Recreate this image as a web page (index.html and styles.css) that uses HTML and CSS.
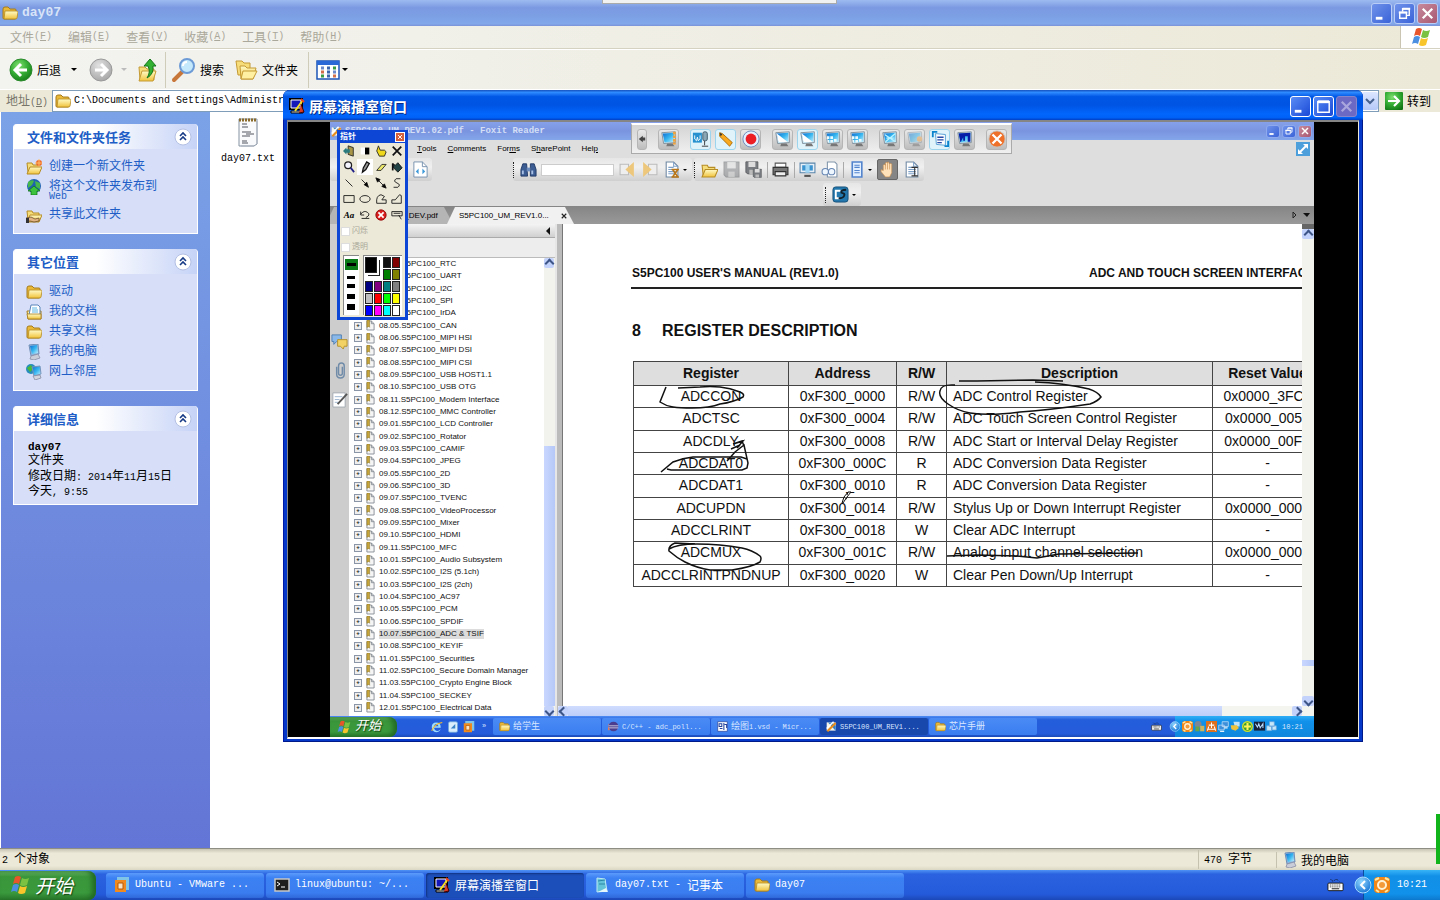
FILE: index.html
```html
<!DOCTYPE html>
<html lang="zh-CN">
<head>
<meta charset="utf-8">
<title>day07</title>
<link rel="stylesheet" href="styles.css">
</head>
<body>
<svg class="defs" aria-hidden="true">
  <defs>
    <linearGradient id="gy" x1="0" y1="0" x2="0" y2="1"><stop offset="0" stop-color="#fffbc8"/><stop offset="1" stop-color="#f1c33c"/></linearGradient>
    <linearGradient id="gb" x1="0" y1="0" x2="1" y2="1"><stop offset="0" stop-color="#0d6bd0"/><stop offset=".5" stop-color="#35b5ef"/><stop offset="1" stop-color="#c8f3ff"/></linearGradient>
    <radialGradient id="gg" cx=".4" cy=".3" r=".8"><stop offset="0" stop-color="#7fe06f"/><stop offset=".5" stop-color="#35ad35"/><stop offset="1" stop-color="#0f7413"/></radialGradient>
    <radialGradient id="gr" cx=".4" cy=".3" r=".8"><stop offset="0" stop-color="#e2e2e2"/><stop offset="1" stop-color="#a0a0a0"/></radialGradient>
    <radialGradient id="gc" cx=".4" cy=".3" r=".8"><stop offset="0" stop-color="#8fd6ff"/><stop offset="1" stop-color="#0c6bd0"/></radialGradient>
  </defs>
  <symbol id="folder" viewBox="0 0 16 16"><path d="M1 4q0-2 2-2h3l2 2h5q1 0 1 1v8q0 1-1 1H2q-1 0-1-1z" fill="#e9b93a" stroke="#a57b1c"/><path d="M3 6h11q2 0 2 1l-1 6q0 1-2 1H2z" fill="url(#gy)" stroke="#b58a20" stroke-width=".8"/></symbol>
  <symbol id="open" viewBox="0 0 16 16"><path d="M1 4h5l1 2h6v7H2z" fill="#f7dc7a" stroke="#b68c24"/><path d="M4 8h12l-3 7H1z" fill="url(#gy)" stroke="#b68c24"/></symbol>
  <symbol id="newfolder" viewBox="0 0 16 16"><use href="#open"/><circle cx="13" cy="4" r="3" fill="#ee6b2b"/><path d="M13 0v8M9 4h8" stroke="#ffbd6b"/></symbol>
  <symbol id="web" viewBox="0 0 16 16"><circle cx="8" cy="7" r="7" fill="#1e62b0"/><path d="M2 3q4-3 6-1l-2 4-4 3zM9 2l5 2v6l-4-2z" fill="#46b84b"/><path d="M8 7l6 5h-3v4H5v-4H2z" fill="#3cc23c" stroke="#0d6d14" stroke-width=".7"/></symbol>
  <symbol id="share" viewBox="0 0 16 16"><use href="#open"/><path d="M0 11l5-1 4 2 4-1v3l-5 1-4-1-4 1z" fill="#e2b483" stroke="#60421d" stroke-width=".7"/><path d="M0 11h3v5H0z" fill="#333"/></symbol>
  <symbol id="docs" viewBox="0 0 16 16"><path d="M1 7h14v8H2z" fill="url(#gy)" stroke="#a57b1c"/><path d="M5 1h7l2 2v8H3z" fill="#fff" stroke="#5a83b8"/><path d="M6 4h5M6 6h6M6 8h6" stroke="#5eb6e4"/><path d="M1 10h14v5H2z" fill="url(#gy)" stroke="#a57b1c" stroke-width=".8"/></symbol>
  <symbol id="pc" viewBox="0 0 16 16"><path d="M3 1l9-1 1 10-8 2z" fill="#8fb4dd" stroke="#6f8fb8"/><path d="M4 2l7-1 1 8-6 1z" fill="url(#gb)"/><path d="M5 12l7-2 2 4-6 2-4-1z" fill="#c9ccd9" stroke="#898ea4" stroke-width=".8"/></symbol>
  <symbol id="net" viewBox="0 0 16 16"><circle cx="5" cy="5" r="5" fill="#278cbd"/><path d="M1 4l4-3 2 4-3 3z" fill="#48ba38"/><path d="M6 3l8-1 1 8-7 2z" fill="url(#gb)" stroke="#7694bb"/><path d="M7 12l7-1 1 3-6 2z" fill="#d3d5df" stroke="#898ea4" stroke-width=".8"/></symbol>
  <symbol id="note" viewBox="0 0 22 30"><path d="M2 2h18v25l-3 2H2z" fill="#f9fafc" stroke="#8793a2"/><path d="M2 3h18" stroke="#8b6b29" stroke-width="3" stroke-dasharray="2 1"/><path d="M5 7h5M5 10h6M5 15h9M9 17h8M5 19h8M5 24h5M5 26h6" stroke="#50555e"/><path d="M20 4v23M17 29H4" stroke="#b8bec8" stroke-width="2"/></symbol>
  <symbol id="flag" viewBox="0 0 20 20"><path d="M5 2q3-2 6 0L9 9q-3-2-6 0z" fill="#e8552a"/><path d="M12 3q3 2 7 0l-2 7q-4 2-7 0z" fill="#7cc242"/><path d="M3 10q3-2 6 0l-2 7q-3-2-6 0z" fill="#4b8fe0"/><path d="M10 11q3 2 7 0l-2 7q-4 2-7 0z" fill="#f8c52b"/></symbol>
  <symbol id="player" viewBox="0 0 16 16"><path d="M1 1h12v10H1z" fill="#1417b8" stroke="#000" stroke-width="2"/><path d="M2 2h10v8H2z" fill="none" stroke="#fff"/><path d="M2 13h12v2H2z" fill="#d8d8d8" stroke="#000"/><path d="M14 2L6 13" stroke="#f7df22" stroke-width="2"/><path d="M12 6l3 8-5 1" fill="#d83b22" stroke="#400"/><path d="M12 1l3 3" stroke="#e54121" stroke-width="2"/></symbol>
  <symbol id="min" viewBox="0 0 20 20"><path d="M4 15h7" stroke="#fff" stroke-width="3"/></symbol>
  <symbol id="max" viewBox="0 0 20 20"><path d="M4 5h12v11H4z" fill="none" stroke="#fff" stroke-width="1.5"/><path d="M4 5h12" stroke="#fff" stroke-width="3"/></symbol>
  <symbol id="restore" viewBox="0 0 20 20"><path d="M8 8V5h7v7h-3M5 9h7v6H5z" fill="none" stroke="#fff" stroke-width="1.5"/><path d="M4 9h9M8 5h8" stroke="#fff" stroke-width="2"/></symbol>
  <symbol id="close" viewBox="0 0 20 20"><path d="M5 5l10 10M15 5L5 15" stroke="currentColor" stroke-width="2.4"/></symbol>
  <symbol id="chev" viewBox="0 0 18 18"><circle cx="9" cy="9" r="8" fill="#fff" stroke="#b3bfe3"/><path d="M6 8l3-3 3 3M6 12l3-3 3 3" fill="none" stroke="#173a86" stroke-width="1.6"/></symbol>
  <symbol id="kbd" viewBox="0 0 18 14"><path d="M4 1q2 3 4 1t5 1" stroke="#111" fill="none" stroke-dasharray="1 1"/><rect x="1" y="5" width="16" height="8" rx="1" fill="#fff" stroke="#111"/><path d="M3 7h12M3 9h12" stroke="#111" stroke-dasharray="1 1"/><path d="M5 11h8" stroke="#111"/></symbol>
  <symbol id="back" viewBox="0 0 18 18"><circle cx="9" cy="9" r="8" fill="url(#gc)" stroke="#a8dcff"/><path d="M11 5L7 9l4 4" fill="none" stroke="#fff" stroke-width="2"/></symbol>
  <symbol id="orange" viewBox="0 0 16 16"><rect width="16" height="16" rx="4" fill="#f08716"/><path d="M1 3l4-2M15 3l-4-2M2 13l3 2M14 13l-3 2" stroke="#ffe6a0" stroke-width="2"/><circle cx="8" cy="8" r="4" fill="#f39a3a" stroke="#fff3d6" stroke-width="2"/></symbol>
  <symbol id="vm" viewBox="0 0 16 16"><path d="M3 0h12v13h-3V4H3z" fill="#80c4e8"/><path d="M1 3h11v12H1z" fill="#f08a1f"/><path d="M4 6h5v6H4z" fill="#f8e4c4" stroke="#b85b08"/></symbol>
  <symbol id="term" viewBox="0 0 16 16"><path d="M1 2h14v12H1z" fill="#1e1e1e" stroke="#c8c8c8" stroke-width="1.5"/><path d="M3 5l3 2-3 2M7 10h4" fill="none" stroke="#fff"/></symbol>
  <symbol id="pad" viewBox="0 0 16 16"><path d="M3 1l8 1 2 12-10 1z" fill="#63c3d9" stroke="#bfeaf3"/><path d="M4 4l7-1M5 7h6" stroke="#2c87a7"/><path d="M12 11l2 4H4" fill="#e6f7fb"/></symbol>
  <symbol id="bm" viewBox="0 0 10 12"><path d="M1 1h5l3 3v7H1z" fill="#f5f5f5" stroke="#858b94"/><path d="M6 1v3h3" fill="none" stroke="#858b94"/><path d="M1 0h3v8L3 7 1 8z" fill="#c6a63c" stroke="#907620" stroke-width=".6"/></symbol>
  <symbol id="foxit" viewBox="0 0 16 16"><path d="M1 2h13v12H1z" fill="#f5f3e8"/><path d="M3 2h6l5 5v7" fill="#3380c9"/><path d="M2 15L14 3" stroke="#e88d1d" stroke-width="3"/><path d="M1 11L11 1" stroke="#fff" stroke-width="2"/></symbol>
  <symbol id="eclipse" viewBox="0 0 16 16"><circle cx="8" cy="8" r="7" fill="#4b3c8f"/><path d="M1 7h14M1 10h14" stroke="#fff"/><path d="M0 4q-2 5 2 9" stroke="#f07b4e" stroke-width="2" fill="none"/></symbol>
  <symbol id="visio" viewBox="0 0 16 16"><path d="M1 1h14v14H1z" fill="#fff" stroke="#243d99"/><path d="M3 4h4v4H3zM10 3v10M4 11h4M11 5h3v5" fill="none" stroke="#23409d" stroke-width="1.5"/></symbol>
  <symbol id="ie" viewBox="0 0 16 16"><path d="M13 9H4q1 5 6 4l3-2q-2 4-6 4-6-1-6-7t6-6q6 0 6 7zM4 7h6q-1-3-3-3T4 7z" fill="#9bdcff"/><path d="M1 13Q4 4 15 2" stroke="#f6bc2d" fill="none" stroke-width="1.5"/></symbol>
  <symbol id="desk" viewBox="0 0 16 16"><rect x="2" y="1" width="12" height="14" rx="2" fill="#d9edfc" stroke="#6ca5da"/><path d="M5 10l6-6v6z" fill="#3b83c8"/></symbol>
  <symbol id="screen" viewBox="0 0 20 20"><path d="M2 3l15-1v12L4 15z" fill="#dfeaf1" stroke="#7c8c98"/><path d="M3 4l13-1v10L5 14z" fill="url(#gb)"/><path d="M8 15h6l2 3H7z" fill="#777"/></symbol>
  <symbol id="diag" viewBox="0 0 20 20"><use href="#screen"/><path d="M3 4l12 9-10 1z" fill="#fff"/></symbol>
  <symbol id="tiles" viewBox="0 0 20 20"><use href="#screen"/><path d="M3 7h3v3H3zM7 7h3v3H7zM7 11h3v3H7zM11 10h3v3h-3zM4 11h2v3H4z" fill="#e9fbff"/></symbol>
  <symbol id="cross4" viewBox="0 0 20 20"><use href="#screen"/><path d="M4 5l12 8M16 4L5 13M6 9h8" stroke="#baf2ff" stroke-width="1.5"/></symbol>
  <symbol id="floppy" viewBox="0 0 16 16"><path d="M1 1h14v14H3l-2-2z" fill="#797c80" stroke="#5b5d60"/><path d="M4 1h8v6H4z" fill="#ddd"/><path d="M5 10h6v5H5z" fill="#bbb"/></symbol>
  <symbol id="page" viewBox="0 0 16 16"><path d="M3 1h7l4 4v10H3z" fill="#fff" stroke="#6e87a3"/><path d="M10 1v4h4M5 6h5M5 8h7M5 10h7M5 12h7" fill="none" stroke="#7ea1c8"/></symbol>
  <symbol id="fit" viewBox="0 0 16 18"><path d="M1 1h9l5 5v11H1z" fill="#fff" stroke="#7691ad"/><path d="M10 1v5h5" fill="none" stroke="#7691ad"/><path d="M6 8v6l-3-3zM10 8v6l3-3z" fill="#3f9ad9"/></symbol>
</svg>

<main class="desktop">
  <section class="explorer">
    <header class="title">
      <svg class="i16"><use href="#folder"/></svg><h1 class="title-name">day07</h1>
      <div class="caps">
        <button class="cap" aria-label="最小化"><svg><use href="#min"/></svg></button>
        <button class="cap" aria-label="还原"><svg><use href="#restore"/></svg></button>
        <button class="cap red" aria-label="关闭"><svg><use href="#close"/></svg></button>
      </div>
    </header>
    <nav class="menu">
      <button>文件<span class="en">(<u>F</u>)</span></button><button>编辑<span class="en">(<u>E</u>)</span></button><button>查看<span class="en">(<u>V</u>)</span></button><button>收藏<span class="en">(<u>A</u>)</span></button><button>工具<span class="en">(<u>T</u>)</span></button><button>帮助<span class="en">(<u>H</u>)</span></button>
      <div class="throbber"><svg class="i20"><use href="#flag"/></svg></div>
    </nav>
    <div class="tools">
      <button class="tool back"><svg class="i24" viewBox="0 0 24 24"><circle cx="12" cy="12" r="11" fill="url(#gg)" stroke="#2b8a2c"/><path d="M18 12H7M12 6l-6 6 6 6" fill="none" stroke="#fff" stroke-width="3"/></svg>后退<i class="caret"></i></button>
      <button class="tool fwd" aria-label="前进"><svg class="i24" viewBox="0 0 24 24"><circle cx="12" cy="12" r="11" fill="url(#gr)" stroke="#999"/><path d="M6 12h11M12 6l6 6-6 6" fill="none" stroke="#fff" stroke-width="3"/></svg><i class="caret dim"></i></button>
      <button class="tool up" aria-label="向上"><svg class="i24" viewBox="0 0 24 24"><path d="M3 9h6l2 2h7v11H4z" fill="#f7dc7a" stroke="#c49a35"/><path d="M6 13h14l-3 10H3z" fill="url(#gy)" stroke="#c49a35"/><path d="M14 1l6 7h-3q1 8-6 12 4-6 1-12H8z" fill="#33b133" stroke="#14761a"/></svg></button>
      <button class="tool find"><svg class="i24" viewBox="0 0 24 24"><path d="M10 14l-8 8" stroke="#c8773a" stroke-width="4" stroke-linecap="round"/><circle cx="15" cy="8" r="7" fill="#c5e9fc" stroke="#6c9bd6" stroke-width="2"/><path d="M11 8q0-4 4-4" stroke="#fff" stroke-width="2" fill="none"/></svg>搜索</button>
      <button class="tool dirs"><svg class="i24" viewBox="0 0 24 24"><path d="M2 3h6l2 2h6v12H4z" fill="#f7dc7a" stroke="#c49a35"/><path d="M6 8h5l2 2h9l-3 11H7z" fill="url(#gy)" stroke="#c49a35"/><path d="M9 13h14l-4 8H7z" fill="#fff0a2" stroke="#c49a35"/></svg>文件夹</button>
      <button class="tool views" aria-label="查看方式"><svg class="i24" viewBox="0 0 24 20"><rect x="1" y="1" width="22" height="18" fill="#fff" stroke="#1d55b8" stroke-width="1.5"/><path d="M1 3h22" stroke="#2b6ad6" stroke-width="4"/><path d="M5 8h3M17 12h3" stroke="#6b88c8" stroke-width="3"/><path d="M5 12h3M17 16h3" stroke="#d2704c" stroke-width="3"/><path d="M17 8h3M5 16h3" stroke="#3a9b45" stroke-width="3"/><path d="M11 8h3M11 12h3M11 16h3" stroke="#3b66ae" stroke-width="3"/></svg><i class="caret"></i></button>
    </div>
    <div class="address">
      <label for="addr">地址<span class="en">(<u>D</u>)</span></label>
      <div class="field"><svg class="i16"><use href="#folder"/></svg><input id="addr" class="en" value="C:\Documents and Settings\Administrator\day07"><button class="drop" aria-label="展开"><svg viewBox="0 0 10 10"><path d="M1 3l4 4 4-4" fill="none" stroke="#45618f" stroke-width="2"/></svg></button></div>
      <button class="go"><svg viewBox="0 0 18 18"><rect width="18" height="18" rx="1" fill="url(#gg)"/><path d="M3 9h10M9 4l5 5-5 5" fill="none" stroke="#fff" stroke-width="2.2"/></svg>转到</button>
    </div>
    <div class="client">
      <aside class="side">
        <section class="box"><h2>文件和文件夹任务<svg><use href="#chev"/></svg></h2>
          <ul><li><svg><use href="#newfolder"/></svg><a href="#">创建一个新文件夹</a></li><li class="two"><svg><use href="#web"/></svg><a href="#">将这个文件夹发布到<span class="en">Web</span></a></li><li><svg><use href="#share"/></svg><a href="#">共享此文件夹</a></li></ul></section>
        <section class="box"><h2>其它位置<svg><use href="#chev"/></svg></h2>
          <ul><li><svg><use href="#folder"/></svg><a href="#">驱动</a></li><li><svg><use href="#docs"/></svg><a href="#">我的文档</a></li><li><svg><use href="#folder"/></svg><a href="#">共享文档</a></li><li><svg><use href="#pc"/></svg><a href="#">我的电脑</a></li><li><svg><use href="#net"/></svg><a href="#">网上邻居</a></li></ul></section>
        <section class="box info"><h2>详细信息<svg><use href="#chev"/></svg></h2>
          <div class="details"><b class="en">day07</b><p>文件夹</p><p class="date">修改日期<span class="en">: 2014</span>年<span class="en">11</span>月<span class="en">15</span>日<br>今天<span class="en">, 9:55</span></p></div></section>
      </aside>
      <div class="files"><figure><svg><use href="#note"/></svg><figcaption class="en">day07.txt</figcaption></figure></div>
    </div>
    <footer class="status"><span class="count"><span class="en">2 </span>个对象</span><span class="bytes"><span class="en">470 </span>字节</span><span class="zone"><svg class="i16"><use href="#pc"/></svg>我的电脑</span></footer>
  </section>

  <footer class="taskbar">
    <button class="start"><svg class="i20"><use href="#flag"/></svg>开始</button>
    <button class="task"><svg><use href="#vm"/></svg><span class="en">Ubuntu - VMware ...</span></button>
    <button class="task"><svg><use href="#term"/></svg><span class="en">linux@ubuntu: ~/...</span></button>
    <button class="task on"><svg><use href="#player"/></svg>屏幕演播室窗口</button>
    <button class="task"><svg><use href="#pad"/></svg><span class="en">day07.txt - </span>记事本</button>
    <button class="task"><svg><use href="#folder"/></svg><span class="en">day07</span></button>
    <svg class="kbd"><use href="#kbd"/></svg>
    <div class="tray"><svg class="hide"><use href="#back"/></svg><svg><use href="#orange"/></svg><time class="en">10:21</time></div>
  </footer>

  <section class="player">
    <header class="ptitle"><svg class="i16"><use href="#player"/></svg><h2>屏幕演播室窗口</h2>
      <div class="caps"><button class="cap" aria-label="最小化"><svg><use href="#min"/></svg></button><button class="cap" aria-label="最大化"><svg><use href="#max"/></svg></button><button class="cap off" aria-label="关闭" disabled><svg><use href="#close"/></svg></button></div>
    </header>
    <div class="stage">
      <div class="video">
        <header class="ftitle"><svg><use href="#foxit"/></svg><span>S5PC100_UM_REV1.02.pdf - Foxit Reader</span>
          <div class="caps small"><button class="cap" aria-label="最小化"><svg><use href="#min"/></svg></button><button class="cap" aria-label="还原"><svg><use href="#restore"/></svg></button><button class="cap red" aria-label="关闭"><svg><use href="#close"/></svg></button></div></header>
        <nav class="fmenu"><button><u>T</u>ools</button><button><u>C</u>omments</button><button>For<u>m</u>s</button><button>S<u>h</u>arePoint</button><button>Hel<u>p</u></button><svg class="expand" viewBox="0 0 14 14"><rect width="14" height="14" fill="#4d9fdb"/><path d="M2 12V7l5 5zM12 2v5L7 2z" fill="#fff"/><path d="M4 10l6-6" stroke="#fff" stroke-width="2"/></svg></nav>
        <div class="ftools">
          <div class="grp one"><svg viewBox="0 0 16 18"><use href="#fit"/></svg></div>
          <div class="grp search"><i class="grip"></i><svg viewBox="0 0 18 18"><path d="M3 3h4l1 13H1V9zM11 3h4l2 6v7h-6z" fill="#3c5c94" stroke="#233c67"/><path d="M7 7h4v4H7z" fill="#6f8fc1"/><path d="M3 10v4M13 10v4" stroke="#a9c1e4" stroke-width="2"/></svg><input aria-label="Find">
            <svg viewBox="0 0 16 16"><path d="M1 3h8v10H1z" fill="#eee" stroke="#bbb"/><path d="M14 1v14L6 8z" fill="#edc77b"/></svg><svg viewBox="0 0 16 16"><path d="M7 3h8v10H7z" fill="#eee" stroke="#bbb"/><path d="M2 1v14l8-7z" fill="#edc77b"/></svg><svg viewBox="0 0 16 16"><use href="#page"/><path d="M8 8h7M8 15h7M9 8l5 7M14 8l-5 7" stroke="#b97619" stroke-width="1.5"/></svg><i class="caret"></i></div>
          <div class="grp files2"><i class="grip"></i><svg><use href="#open"/></svg><svg class="pale"><use href="#floppy"/></svg><svg viewBox="0 0 16 16"><use href="#floppy" width="13" height="13"/><use href="#floppy" x="7" y="7" width="9" height="9"/></svg><i class="sep"></i><svg viewBox="0 0 16 16"><path d="M3 2h10v4H3z" fill="#fff" stroke="#555"/><path d="M1 6h14v7H1z" fill="#777" stroke="#333"/><path d="M3 10h10v4H3z" fill="#eee" stroke="#333"/></svg><i class="sep"></i><svg viewBox="0 0 16 16"><path d="M1 2h14v9H1z" fill="#e9eff6" stroke="#5785aa"/><path d="M3 4h10v5H3z" fill="#3b93cf"/><path d="M6 3h4v8H6z" fill="#9fd7f6"/><path d="M5 14h6" stroke="#555" stroke-width="2"/></svg><svg viewBox="0 0 16 16"><path d="M6 1h7l2 2v12H6z" fill="#fff" stroke="#8095aa"/><circle cx="4" cy="10" r="3" fill="#eef6ff" stroke="#6787b4"/><circle cx="10" cy="10" r="3" fill="#eef6ff" stroke="#6787b4"/></svg><i class="sep"></i><svg viewBox="0 0 16 16"><path d="M4 1h9v14H4z" fill="#e2efff" stroke="#5284cd" stroke-width="1.5"/><path d="M6 4h5M6 6h5M6 9h5M6 11h5" stroke="#5284cd"/></svg><i class="caret"></i><span class="hand"><svg viewBox="0 0 16 16"><path d="M4 9V4l1-1 1 1V2l1-1 1 1V1h1l1 2V3l1-1 1 1v8l-2 4H6L2 10V8z" fill="#ffe2ba" stroke="#c58b4b" stroke-width=".6"/><path d="M6 3v5M8 2v6M10 3v5" stroke="#c58b4b" stroke-width=".6"/></svg></span><svg viewBox="0 0 16 16"><use href="#page"/><path d="M8 6h6M8 14h6M11 6v8" stroke="#333"/></svg></div>
          <div class="grp last"><i class="grip"></i><svg viewBox="0 0 18 18"><rect x="1" y="1" width="16" height="16" rx="3" fill="#2378ad" stroke="#155078"/><path d="M9 5H4v8h4" fill="none" stroke="#fff" stroke-width="2"/><path d="M15 4q-6 0-5 3 4 1 3 3-1 3-6 3" fill="none" stroke="#10202b" stroke-width="2"/></svg><i class="caret"></i></div>
        </div>
        <div class="tabs"><div class="tab gray">S5PC100_DEV.pdf</div><div class="tab"><span>S5PC100_UM_REV1.0...</span><button aria-label="Close tab"><svg viewBox="0 0 8 8"><path d="M1 1l6 6M7 1L1 7" stroke="#222" stroke-width="1.5"/></svg></button></div><svg class="tabnav" viewBox="0 0 18 8"><path d="M1 1l3 3-3 3z" fill="none" stroke="#222"/><path d="M11 2h7l-3 4z" fill="#111"/></svg></div>
        <div class="work">
          <div class="strip"><svg viewBox="0 0 18 18"><path d="M1 2h10v7H6l-3 3V9H1z" fill="#8ab8e9" stroke="#4e7eb3"/><path d="M7 7h10v7h-3l-1 3-3-3H7z" fill="#f2d264" stroke="#b4902c"/></svg><svg viewBox="0 0 18 18"><path d="M6 5v8q0 4 4 4t4-4V4q0-3-3-3T8 4v8q0 2 2 2t2-2V5" fill="none" stroke="#6f8ba8" stroke-width="1.5"/></svg><svg viewBox="0 0 18 18"><path d="M2 2h13v15H2z" fill="#fff" stroke="#a4aab1"/><path d="M4 6h8M4 9h5M4 12h4" stroke="#9fb6cf"/><path d="M17 3L7 14" stroke="#555" stroke-width="2"/></svg></div>
          <div class="marks">
            <div class="mhead"><svg viewBox="0 0 4 8"><path d="M4 0v8L0 4z" fill="#111"/></svg></div><div class="mtools"></div>
            <div class="tree">
              <ul>
<li><svg><use href="#bm"/></svg>08.00.S5PC100_RTC</li>
<li><svg><use href="#bm"/></svg>08.01.S5PC100_UART</li>
<li><svg><use href="#bm"/></svg>08.02.S5PC100_I2C</li>
<li><svg><use href="#bm"/></svg>08.03.S5PC100_SPI</li>
<li><svg><use href="#bm"/></svg>08.04.S5PC100_IrDA</li>
<li><svg><use href="#bm"/></svg>08.05.S5PC100_CAN</li>
<li><svg><use href="#bm"/></svg>08.06.S5PC100_MIPI HSI</li>
<li><svg><use href="#bm"/></svg>08.07.S5PC100_MIPI DSI</li>
<li><svg><use href="#bm"/></svg>08.08.S5PC100_MIPI CSI</li>
<li><svg><use href="#bm"/></svg>08.09.S5PC100_USB HOST1.1</li>
<li><svg><use href="#bm"/></svg>08.10.S5PC100_USB OTG</li>
<li><svg><use href="#bm"/></svg>08.11.S5PC100_Modem Interface</li>
<li><svg><use href="#bm"/></svg>08.12.S5PC100_MMC Controller</li>
<li><svg><use href="#bm"/></svg>09.01.S5PC100_LCD Controller</li>
<li><svg><use href="#bm"/></svg>09.02.S5PC100_Rotator</li>
<li><svg><use href="#bm"/></svg>09.03.S5PC100_CAMIF</li>
<li><svg><use href="#bm"/></svg>09.04.S5PC100_JPEG</li>
<li><svg><use href="#bm"/></svg>09.05.S5PC100_2D</li>
<li><svg><use href="#bm"/></svg>09.06.S5PC100_3D</li>
<li><svg><use href="#bm"/></svg>09.07.S5PC100_TVENC</li>
<li><svg><use href="#bm"/></svg>09.08.S5PC100_VideoProcessor</li>
<li><svg><use href="#bm"/></svg>09.09.S5PC100_Mixer</li>
<li><svg><use href="#bm"/></svg>09.10.S5PC100_HDMI</li>
<li><svg><use href="#bm"/></svg>09.11.S5PC100_MFC</li>
<li><svg><use href="#bm"/></svg>10.01.S5PC100_Audio Subsystem</li>
<li><svg><use href="#bm"/></svg>10.02.S5PC100_I2S (5.1ch)</li>
<li><svg><use href="#bm"/></svg>10.03.S5PC100_I2S (2ch)</li>
<li><svg><use href="#bm"/></svg>10.04.S5PC100_AC97</li>
<li><svg><use href="#bm"/></svg>10.05.S5PC100_PCM</li>
<li><svg><use href="#bm"/></svg>10.06.S5PC100_SPDIF</li>
<li><svg><use href="#bm"/></svg><span class="sel">10.07.S5PC100_ADC &amp; TSIF</span></li>
<li><svg><use href="#bm"/></svg>10.08.S5PC100_KEYIF</li>
<li><svg><use href="#bm"/></svg>11.01.S5PC100_Securities</li>
<li><svg><use href="#bm"/></svg>11.02.S5PC100_Secure Domain Manager</li>
<li><svg><use href="#bm"/></svg>11.03.S5PC100_Crypto Engine Block</li>
<li><svg><use href="#bm"/></svg>11.04.S5PC100_SECKEY</li>
<li><svg><use href="#bm"/></svg>12.01.S5PC100_Electrical Data</li>
              </ul>
              <div class="vbar"><b class="arr up2"></b><i class="gap"></i><i class="thumb"></i><b class="arr down2"></b></div>
            </div>
          </div>
          <div class="split"></div>
          <div class="viewer">
            <div class="row">
              <article class="page">
                <div class="phead"><span>S5PC100 USER'S MANUAL (REV1.0)</span><span class="right">ADC AND TOUCH SCREEN INTERFACE</span></div>
                <h3><span>8</span>REGISTER DESCRIPTION</h3>
                <table>
                  <colgroup><col class="c1"><col class="c2"><col class="c3"><col class="c4"><col class="c5"></colgroup>
                  <thead><tr><th>Register</th><th>Address</th><th>R/W</th><th>Description</th><th>Reset Value</th></tr></thead>
                  <tbody>
                  <tr><td>ADCCON</td><td>0xF300_0000</td><td>R/W</td><td>ADC Control Register</td><td>0x0000_3FC4</td></tr>
                  <tr><td>ADCTSC</td><td>0xF300_0004</td><td>R/W</td><td>ADC Touch Screen Control Register</td><td>0x0000_0058</td></tr>
                  <tr><td>ADCDLY</td><td>0xF300_0008</td><td>R/W</td><td>ADC Start or Interval Delay Register</td><td>0x0000_00FF</td></tr>
                  <tr><td>ADCDAT0</td><td>0xF300_000C</td><td>R</td><td>ADC Conversion Data Register</td><td>-</td></tr>
                  <tr><td>ADCDAT1</td><td>0xF300_0010</td><td>R</td><td>ADC Conversion Data Register</td><td>-</td></tr>
                  <tr><td>ADCUPDN</td><td>0xF300_0014</td><td>R/W</td><td>Stylus Up or Down Interrupt Register</td><td>0x0000_0000</td></tr>
                  <tr><td>ADCCLRINT</td><td>0xF300_0018</td><td>W</td><td>Clear ADC Interrupt</td><td>-</td></tr>
                  <tr><td>ADCMUX</td><td>0xF300_001C</td><td>R/W</td><td>Analog input channel selection</td><td>0x0000_0000</td></tr>
                  <tr><td>ADCCLRINTPNDNUP</td><td>0xF300_0020</td><td>W</td><td>Clear Pen Down/Up Interrupt</td><td>-</td></tr>
                  </tbody>
                </table>
                <svg class="ink" viewBox="563 224 739 482"><path d="M666 387l-6 15q6 4 13 5t19 1q18 0 28-4 14-2 23-7 2-3-3-5-10-4-20-5t-20 0l-22 1M955 385q-14-1-15 6-2 6 8 13 10 7 22 9 20 3 50-1 30-2 70-8 8-3 11-7-3-5-12-8-26-6-54-7M959 381h18l56-1 30 1M727 461l8-9 9-7 4 18-1 5-5 2H671l-4-1M661 472l12-10q10-4 20-5h48l6 2M731 449l9-4-3 3 6-7-10 3 9-3 2 5M695 544l-20-1q-7 3-6 8 8 7 16 11 12 6 25 8h22q20-3 28-8 2-4 0-6-8-6-18-8-22-4-45-4-20 0-28 5M947 556l30-1 40 1 20 2 22-4 79-1"/><path class="pen" d="M842 503l2-6 4-5h3l-4 5-4 6zM844 497l3 2M848 492l-1 3"/></svg>
              </article>
              <div class="vbar wide"><b class="arr up2"></b><i class="gap"></i><i class="thumb"></i><i class="gap"></i><b class="arr down2"></b></div>
            </div>
            <div class="hbar"><b class="arr left2"></b><i class="thumb"></i><i class="gap"></i><b class="arr right2"></b></div>
          </div>
        </div>
        <footer class="minibar">
          <button class="start"><svg><use href="#flag"/></svg>开始</button>
          <div class="quick"><svg><use href="#ie"/></svg><svg><use href="#desk"/></svg><svg><use href="#vm"/></svg><span>»</span></div>
          <button class="task"><svg><use href="#folder"/></svg><b>给学生</b></button>
          <button class="task"><svg><use href="#eclipse"/></svg>C/C++ - adc_poll...</button>
          <button class="task"><svg><use href="#visio"/></svg><b>绘图</b>1.vsd - Micr...</button>
          <button class="task on"><svg><use href="#foxit"/></svg>S5PC100_UM_REV1....</button>
          <button class="task"><svg><use href="#folder"/></svg><b>芯片手册</b></button>
          <svg class="kbd"><use href="#kbd"/></svg>
          <div class="tray"><svg><use href="#back"/></svg><svg><use href="#orange"/></svg><svg viewBox="0 0 16 16"><circle cx="6" cy="5" r="5" fill="#7b8796"/><path d="M2 8h6v7H2z" fill="#67a34d"/><path d="M9 7h6v8H9z" fill="#cbb660"/></svg><svg viewBox="0 0 16 16"><path d="M0 0h16v16H0z" fill="#dc701f"/><path d="M8 2v8M4 6h8M3 12h10M4 8l-2 6M12 8l2 6" stroke="#fff" stroke-width="1.5"/></svg><svg viewBox="0 0 16 16"><path d="M6 1h9v7H6zM1 6h8v7H1z" fill="#3d8fd9" stroke="#cfe8fa"/><path d="M3 15h6M9 10h5" stroke="#e4eef6" stroke-width="2"/></svg><svg viewBox="0 0 16 16"><path d="M5 1h9v7H7z" fill="#bde3f8"/><path d="M1 6h9l3 4-5 4-6-2z" fill="#edc33c"/></svg><svg viewBox="0 0 16 16"><circle cx="8" cy="8" r="8" fill="#cbe02f"/><circle cx="8" cy="8" r="6" fill="#3b9c32"/><path d="M8 3v10M3 8h10" stroke="#fff35a" stroke-width="3"/></svg><svg viewBox="0 0 16 16"><path d="M0 1h16v13H0z" fill="#15203c"/><path d="M2 4l3 5 2-5 2 6 4-6v6" fill="none" stroke="#b9dcff" stroke-width="1.5"/></svg><svg viewBox="0 0 16 16"><path d="M5 1h7v7H5zM1 7h7v7H1zM9 7h6v6H9z" fill="#c8e8fa" stroke="#6aa6da"/></svg><time>10:21</time></div>
        </footer>

        <div class="float">
          <button aria-label="收起" class="slim"><svg viewBox="0 0 10 20"><path d="M1 10l5-4v2h3v4H6v2z" fill="#444"/></svg></button>
          <button aria-label="屏幕" class="g1"><svg viewBox="0 0 20 20"><use href="#screen"/><path d="M16 2v14" stroke="#f1a33c" stroke-width="3" stroke-dasharray="3 1"/></svg></button>
          <button aria-label="声音" class="g1 lit"><svg viewBox="0 0 20 20"><path d="M1 3h10v11H1z" fill="#2791cf"/><path d="M3 6v4l2 2 1-4 1 4 2-2V6" fill="none" stroke="#fff"/><rect x="12" y="2" width="5" height="10" rx="2" fill="#8ba6b5" stroke="#3b5665"/><path d="M14 12v5M11 18h7" stroke="#333"/></svg></button>
          <button aria-label="画笔" class="lit"><svg viewBox="0 0 20 20"><path d="M3 3l3 1 11 10-3 4L3 7z" fill="#f9a91d" stroke="#a86b09"/><path d="M3 3l1 4 2-2z" fill="#333"/></svg></button>
          <button aria-label="录制"><svg viewBox="0 0 20 20"><circle cx="10" cy="10" r="9" fill="#e3efff" stroke="#6687b8"/><circle cx="10" cy="10" r="6" fill="#ec1d25"/></svg></button>
          <button aria-label="切换" class="g1"><svg><use href="#diag"/></svg></button>
          <button aria-label="切换二" class="lit"><svg><use href="#diag"/></svg></button>
          <button aria-label="平铺"><svg><use href="#tiles"/></svg></button>
          <button aria-label="平铺二"><svg><use href="#tiles"/></svg></button>
          <button aria-label="全屏" class="g1"><svg><use href="#cross4"/></svg></button>
          <button aria-label="远程"><svg class="pale" viewBox="0 0 20 20"><use href="#screen"/><circle cx="15" cy="10" r="3" fill="#f0a957"/></svg></button>
          <button aria-label="文档" class="lit"><svg viewBox="0 0 20 20"><path d="M5 4l11 1v12l-10-1z" fill="#fff" stroke="#4d9bd2"/><path d="M7 8h7M7 11h7M7 14h5" stroke="#2448a5" stroke-width="1.5"/><path d="M2 8V2h5M19 12v6h-4" fill="none" stroke="#0b83cd" stroke-width="2"/></svg></button>
          <button aria-label="分屏"><svg viewBox="0 0 20 20"><use href="#screen"/><path d="M3 4l13-1v10h-3V7h-3v5H8V8L5 14z" fill="#061da8"/></svg></button>
          <button aria-label="退出" class="g1"><svg viewBox="0 0 20 20"><circle cx="10" cy="10" r="9" fill="#ef7129" stroke="#c6c0ba"/><path d="M5 5l10 10M15 5L5 15" stroke="#fff" stroke-width="2.5"/></svg></button>
        </div>

        <section class="palette">
          <header>指针<button aria-label="关闭"><svg><use href="#close"/></svg></button></header>
          <div class="pbody">
            <div class="pt">
              <svg viewBox="0 0 14 14"><path d="M6 1l6 2v10l-6-2z" fill="#a99646" stroke="#222"/><path d="M0 7l4-4v2h4v4H4v2z" fill="#287a7d"/></svg><svg viewBox="0 0 14 14"><path d="M2 3h5v8H2z" fill="#fff"/><path d="M7 3h5v8H7z"/></svg><svg viewBox="0 0 14 14"><path d="M4 1l2 5h5l2 2-2 5H5L2 7z" fill="#efd719" stroke="#222"/></svg><svg viewBox="0 0 14 14"><path d="M2 2l10 10M12 2L2 12" stroke="#111" stroke-width="2"/></svg>
              <svg viewBox="0 0 14 14"><circle cx="6" cy="5" r="4" fill="#f4f4ff" stroke="#222" stroke-width="1.5"/><path d="M9 8l4 5" stroke="#202088" stroke-width="2"/></svg><svg class="picked" viewBox="0 0 14 14"><path d="M4 13l1-5 4-7 3 2-4 7z" fill="#999" stroke="#111" stroke-width="1.5"/></svg><svg viewBox="0 0 14 14"><path d="M2 11l6-7h5l-6 7z" fill="#ece86a" stroke="#222"/></svg><svg viewBox="0 0 14 14"><path d="M2 3l3 2 3-3 5 6-5 5-5-5z" fill="#244" stroke="#111"/><path d="M2 3v8" stroke="#111" stroke-width="2"/></svg>
              <svg viewBox="0 0 14 14"><path d="M3 3l8 8" stroke="#111"/></svg><svg viewBox="0 0 14 14"><path d="M3 3l6 6M11 12L6 9l3-3z" stroke="#111"/></svg><svg viewBox="0 0 14 14"><path d="M3 3l8 8M1 1l5 2-3 3zM13 13l-5-2 3-3z" stroke="#111"/></svg><svg viewBox="0 0 14 14"><path d="M11 2H6q-4 3 1 5t1 5H3" fill="none" stroke="#111"/></svg>
              <svg viewBox="0 0 14 14"><path d="M1 3h12v8H1z" fill="none" stroke="#111"/></svg><svg viewBox="0 0 14 14"><ellipse cx="7" cy="7" rx="6" ry="4" fill="none" stroke="#111"/></svg><svg viewBox="0 0 14 14"><path d="M2 12q-1-9 5-10l4 2-3 4h5v4z" fill="none" stroke="#111"/></svg><svg viewBox="0 0 14 14"><path d="M1 12V8h4l5-6 2 1v9z" fill="none" stroke="#111"/></svg>
              <i class="aa">Aa</i><svg viewBox="0 0 14 14"><path d="M2 3v4h4M2 6q4-5 8-2t-2 6M3 11h9" fill="none" stroke="#111"/></svg><svg viewBox="0 0 14 14"><circle cx="7" cy="7" r="6" fill="#dc2020" stroke="#800"/><path d="M4 4l6 6M10 4l-6 6" stroke="#fff" stroke-width="2"/></svg><svg viewBox="0 0 14 14"><path d="M1 3h12v5H1zM3 5h8M9 7l3 5" fill="none" stroke="#111"/></svg>
            </div>
            <label><input type="checkbox" disabled>闪烁</label>
            <label><input type="checkbox" disabled>透明</label>
            <div class="pl">
              <div class="widths"><i class="w0"></i><i class="w1"></i><i class="w2"></i><i class="w3"></i><i class="w4"></i></div>
              <div class="swatches"><i class="fg"></i><i class="dots"></i><i class="maroon"></i><i class="green"></i><i class="olive"></i><i class="navy"></i><i class="purple"></i><i class="teal"></i><i class="grey"></i><i class="silver"></i><i class="redc"></i><i class="lime"></i><i class="yellow"></i><i class="blue"></i><i class="pink"></i><i class="aqua"></i><i class="white"></i></div>
            </div>
          </div>
        </section>
      </div>
    </div>
  </section>
  <div class="pull"></div>
  <div class="meter"></div>
</main>
</body>
</html>
```
FILE: styles.css
```css
* { box-sizing: border-box; }
body { margin: 0; font: 12px/14px "Noto Sans CJK SC", sans-serif; color: #000; }
button { font: inherit; color: inherit; border: 0; padding: 0; background: none; display: flex; align-items: center; white-space: nowrap; }
input { font: inherit; border: 0; padding: 0; margin: 0; min-width: 0; }
h1, h2, h3, p, ul, figure { margin: 0; padding: 0; list-style: none; }
svg { display: block; flex: none; overflow: visible; }
i { flex: none; }
.defs { position: absolute; width: 0; height: 0; }
.en { font-family: "Liberation Mono", monospace; font-size: 10px; white-space: pre; }
.i16 { width: 16px; height: 16px; }
.i20 { width: 20px; height: 20px; }
.i24 { width: 24px; height: 24px; }
.pale { opacity: .5; }
.desktop { position: relative; height: 100vh; display: flex; flex-direction: column; overflow: hidden; background: #fff; }
.explorer { flex: 1; min-height: 0; display: flex; flex-direction: column; }

.title { height: 26px; display: flex; align-items: center; gap: 4px; padding: 0 2px; background: linear-gradient(#9dbbf0, #7b99e1 30%, #7c9fe4 60%, #82a8ea 92%, #7b92d8); }
.title-name { font: bold 13px/16px "Liberation Mono", monospace; color: #d8e4f8; }
.caps { display: flex; gap: 2px; margin-left: auto; }
.cap { width: 21px; height: 21px; border: 1px solid #b9cdf6; border-radius: 3px; background: linear-gradient(135deg, #6f92ea, #3a63d8); color: #fff; justify-content: center; }
.cap svg { width: 19px; height: 19px; }
.cap.red { background: linear-gradient(135deg, #c78a9c, #a95872); }

.menu { height: 23px; display: flex; padding-left: 2px; background: linear-gradient(90deg, #f3f3f0, #ece9d8); border-bottom: 1px solid #d6d2c2; color: #aaa89a; }
.menu button { padding: 0 8px; }
.throbber { margin-left: auto; width: 40px; background: #fff; border-left: 1px solid #c9c5b2; display: grid; place-items: center; }
.tools { height: 41px; display: flex; align-items: center; padding-left: 9px; background: linear-gradient(90deg, #f3f3f0, #ece9d8); border-top: 1px solid #fff; border-bottom: 1px solid #fff; }
.tool { gap: 4px; height: 36px; }
.caret { border: 3px solid transparent; border-top-color: #000; border-bottom: 0; }
.caret.dim { border-top-color: #bbb; }
.back .caret { margin-left: 6px; }
.fwd { margin-left: 12px; gap: 8px; }
.up { margin-left: 9px; padding-right: 5px; border-right: 1px solid #d0ccba; }
.find { margin-left: 6px; }
.dirs { margin-left: 10px; padding-right: 10px; border-right: 1px solid #d0ccba; }
.views { margin-left: 7px; gap: 2px; }
.address { height: 22px; display: flex; align-items: stretch; padding-left: 6px; background: #ece9d8; }
.address label { color: #77756a; align-self: center; width: 46px; }
.field { flex: 1; display: flex; align-items: center; background: #fff; border: 1px solid #7f9db9; padding-left: 2px; gap: 3px; }
.field input { flex: 1; }
.drop { width: 16px; height: 18px; background: linear-gradient(#dce6ff, #b5c9f8); justify-content: center; border-radius: 2px; }
.drop svg { width: 10px; }
.go { width: 61px; padding-left: 6px; gap: 4px; }
.go svg { width: 18px; height: 18px; }

.client { flex: 1; min-height: 0; display: flex; background: #fff; }
.side { width: 209px; margin-left: 1px; padding: 12px; display: flex; flex-direction: column; gap: 15px; background: linear-gradient(#7ba2e7, #6375d6); }
.box { width: 185px; border: 1px solid #fff; border-top: 0; border-radius: 4px 4px 0 0; background: #d6dff7; color: #215dc6; overflow: hidden; padding-bottom: 10px; }
.box h2 { height: 25px; display: flex; align-items: center; justify-content: space-between; padding: 0 5px 0 13px; font-size: 13px; line-height: 16px; background: linear-gradient(90deg, #fff 45%, #c6d3f7); }
.box h2 svg { width: 18px; height: 18px; }
.box ul { padding: 6px 0 0 12px; }
.box li { display: flex; gap: 7px; padding: 4px 0; line-height: 12px; }
.box li svg { width: 16px; height: 16px; margin-bottom: -4px; }
.box li.two { padding-bottom: 0; }
.box li.two .en { display: block; line-height: 12px; }
.box a { color: inherit; text-decoration: none; width: 116px; }
.details { color: #000; padding: 10px 0 0 14px; line-height: 12px; }
.details b { font-size: 11px; display: block; line-height: 12px; }
.details .date { margin-top: 4px; }
.box.info { padding-bottom: 5px; }
.files { padding: 5px 0 0 11px; }
.files figure { display: grid; justify-items: center; gap: 5px; }
.files svg { width: 22px; height: 30px; }
.status { height: 22px; display: flex; align-items: center; background: linear-gradient(#c7c4b5, #ece9d8 20%, #ece9d8 80%, #dad7c4); border-top: 1px solid #8f8e84; }
.count { flex: 1; padding-left: 2px; }
.bytes { width: 78px; padding-left: 5px; border-left: 1px solid #c6c2b0; line-height: 16px; }
.zone { width: 164px; height: 16px; border-left: 1px solid #c6c2b0; padding-left: 5px; display: flex; align-items: center; gap: 3px; }

.taskbar { height: 30px; display: flex; align-items: center; gap: 2px; background: linear-gradient(#4f93f5, #2a62df 14%, #245bdb 80%, #1c48b8); color: #fff; }
.start { width: 96px; height: 29px; margin-right: 8px; padding-left: 10px; gap: 5px; font-size: 19px; line-height: 20px; font-style: italic; text-shadow: 1px 1px 1px #124012; border-radius: 0 8px 8px 0; background: linear-gradient(#6bb568, #3a963a 20%, #3a993c 75%, #2a7a2c); box-shadow: inset -4px 0 5px #226b25; }
.taskbar > .task { width: 158px; height: 25px; padding-left: 8px; border-radius: 3px; background: linear-gradient(#5b9bfb, #3c81f3 20%, #3a7df0 80%, #2f68d8); }
.taskbar > .task.on { background: #1d4fba; box-shadow: inset 1px 1px 2px #10337f; }
.task svg { width: 16px; height: 16px; margin-right: 5px; }
.taskbar .kbd { width: 17px; height: 14px; margin-left: auto; }
.taskbar .tray { width: 77px; height: 30px; margin-left: 17px; display: flex; align-items: center; background: linear-gradient(#38b4f6, #1290e8 20%, #1191ea 80%, #0c78cc); border-left: 1px solid #0b4c9c; }
.taskbar .tray svg { width: 16px; height: 16px; }
.taskbar .tray .hide { width: 18px; height: 18px; margin-left: -10px; margin-right: 2px; }
.tray time { margin-left: 7px; }

.player { position: absolute; left: 283px; right: 77px; top: 90px; bottom: 158px; display: flex; flex-direction: column; padding: 0 4px 3px; border-radius: 7px 7px 0 0; background: #0538c8; box-shadow: inset 1px 0 #0019a5, inset -1px -1px #001a8a; }
.ptitle { height: 30px; flex: none; margin: 0 -4px; padding: 2px 6px 0; display: flex; align-items: center; gap: 4px; color: #fff; border-radius: 7px 7px 0 0; background: linear-gradient(#1550bd, #2f8bff 8%, #0057e5 22%, #0054e3 50%, #0266fd 80%, #0061f6 92%, #003fc4); }
.ptitle h2 { font-size: 14px; line-height: 18px; text-shadow: 1px 1px #0a2c86; }
.ptitle .cap { border-color: #fff; background: linear-gradient(135deg, #5a8cf5, #1a49d6); }
.ptitle .cap.off { border-color: #8686cd; background: #6b69c4; color: #a9a5dd; }
.stage { flex: 1; min-height: 0; padding: 0 44px 0 42px; background: #000; border: 1px solid #ece9d8; border-top: 2px solid #858585; border-bottom: 2px solid #fff; border-left-color: #858585; }
.video { position: relative; height: 100%; display: flex; flex-direction: column; background: #dedede; font: 8px/10px "Liberation Sans", "Noto Sans CJK SC", sans-serif; overflow: hidden; }
.ftitle { height: 18px; flex: none; display: flex; align-items: center; gap: 3px; padding: 0 2px 0 1px; background: linear-gradient(#86a1ea, #7a94e0 50%, #84a6ea); color: #d4dff6; font: bold 9px/11px "Liberation Mono", monospace; }
.ftitle > svg { width: 11px; height: 11px; }
.caps.small .cap { width: 14px; height: 13px; border-color: #8fa9ee; }
.caps.small svg { width: 12px; height: 12px; }
.fmenu { height: 18px; flex: none; display: flex; align-items: center; gap: 11px; padding: 0 4px 0 87px; }
.expand { width: 14px; height: 14px; margin-left: auto; }
.ftools { height: 48px; flex: none; display: grid; grid-template: 23px 23px / 102px 77px 179px 1fr; gap: 2px; align-content: start; }
.grp { display: flex; align-items: center; gap: 5px; background: linear-gradient(#e6e6e6, #f0f0f0 40%, #cfcfcf); border-radius: 3px; height: 23px; }
.grp svg { width: 17px; height: 17px; }
.grp.one { grid-column: 1; justify-content: flex-end; padding-right: 3px; }
.grp.search { grid-column: 3; padding-left: 0; }
.grp.search input { width: 73px; height: 12px; background: #fff; border: 1px solid #ccc; margin-left: -1px; }
.grp.files2 { grid-column: 4; width: 230px; padding-left: 0; }
.grp.last { grid-column: 4; width: 38px; margin-left: 129px; padding-left: 2px; }
.grip { width: 2px; height: 16px; border-left: 1px dotted #222; }
.ftools .caret { border-width: 2px; border-bottom: 0; margin-left: -2px; }
.sep { width: 1px; height: 16px; background: #aaa; }
.sep + svg { margin-left: -1px; }
.hand { width: 21px; height: 21px; background: #858585; border: 1px solid #666; border-radius: 2px; display: grid; place-items: center; }
.tabs { height: 18px; flex: none; display: flex; align-items: flex-end; background: linear-gradient(#858585, #999); }
.tab { width: 127px; height: 17px; display: flex; align-items: center; gap: 12px; background: #f1f1f1; padding: 0 6px 0 12px; clip-path: polygon(8px 0, calc(100% - 9px) 0, 100% 100%, 0 100%); margin-left: -6px; font-size: 8px; }
.tab.gray { background: #b5b5b5; padding-left: 44px; margin-left: -4px; }
.tab button svg { width: 6px; height: 6px; }
.tabnav { width: 18px; height: 8px; margin-left: auto; align-self: center; margin-right: 4px; }
.work { flex: 1; min-height: 0; display: flex; }
.strip { width: 19px; background: #cdcdcd; padding-top: 109px; display: flex; flex-direction: column; align-items: center; gap: 12px; }
.strip svg { width: 17px; height: 17px; }
.marks { width: 206px; display: flex; flex-direction: column; background: #fff; }
.mhead { height: 14px; flex: none; display: flex; align-items: center; justify-content: flex-end; padding-right: 5px; background: linear-gradient(#f4f4f4, #d0d0d0); border-bottom: 1px solid #aaa; }
.mhead svg { width: 4px; height: 8px; }
.mtools { height: 20px; flex: none; background: #ededed; border-bottom: 1px solid #bbb; }
.tree { flex: 1; min-height: 0; display: flex; }
.tree ul { flex: 1; min-width: 0; display: flex; flex-direction: column; padding-bottom: 2px; }
.tree li { flex: 1; min-height: 0; display: flex; align-items: center; padding-left: 5px; white-space: nowrap; color: #111; }
.tree li::before { content: "+"; width: 6px; height: 6px; margin-right: 5px; border: 1px solid #8a96a8; background: #eee; font: bold 6px/4px "Liberation Sans", sans-serif; text-align: center; }
.tree li svg { width: 9px; height: 11px; margin: 0 4px 0 -1px; }
.sel { background: #dcdcdc; }
.vbar { width: 11px; display: flex; flex-direction: column; background: #f3f3ee; }
.arr { flex: none; width: 10px; height: 10px; background: #c3d2fb; border-radius: 2px; display: grid; place-items: center; }
.arr::before { content: ""; width: 5px; height: 5px; border: solid #3d5687; border-width: 2px 0 0 2px; }
.up2::before { transform: rotate(45deg); }
.right2::before { transform: rotate(135deg); }
.down2::before { transform: rotate(225deg); }
.left2::before { transform: rotate(315deg); }
.vbar .gap { flex: 176; }
.vbar .thumb { flex: 258; background: linear-gradient(90deg, #c9d7ff, #b5c8f7); }
.split { width: 8px; background: #bbb; border-left: 2px solid #e6e6e6; border-right: 1px solid #777; }
.viewer { flex: 1; min-width: 0; display: flex; flex-direction: column; background: #fff; }
.row { flex: 1; min-height: 0; display: flex; }
.page { position: relative; flex: 1; min-width: 0; overflow: hidden; padding: 42px 0 0 69px; color: #111; }
.phead { height: 23px; display: flex; border-bottom: 2px solid #222; font: bold 12px/14px "Liberation Sans", sans-serif; white-space: nowrap; margin-left: -1px; padding-left: 1px; }
.phead .right { margin-left: auto; width: 213px; }
.page h3 { font-size: 16px; line-height: 20px; margin: 32px 0 20px; display: flex; }
.page h3 span { width: 30px; }
.page table { width: 689px; height: 226px; margin-left: 1px; table-layout: fixed; border-collapse: collapse; border: 1px solid #222; font-size: 14px; line-height: 16px; text-align: center; }
.c1 { width: 155px; }
.c2 { width: 108px; }
.c3 { width: 50px; }
.c4 { width: 266px; }
.c5 { width: 110px; }
.page th, .page td { border: 1px solid #444; padding: 0 0 1px; white-space: nowrap; }
.page thead tr { height: 24px; background: #dedede; }
.page td:nth-child(4) { text-align: left; padding-left: 6px; }
.ink { position: absolute; left: 0; top: 0; width: 739px; height: 482px; fill: none; stroke: #111; stroke-width: 1.5; }
.ink .pen { stroke-width: 1; fill: #fff; }
.vbar.wide { width: 12px; border-top: 5px solid #666; }
.vbar.wide .arr { width: 12px; }
.vbar.wide .thumb { flex: none; height: 6px; }
.vbar.wide .gap { flex: 420; }
.vbar.wide .thumb + .gap { flex: 30; }
.hbar { height: 10px; display: flex; background: #f5f5f0; margin-left: -5px; padding-right: 12px; }
.hbar .thumb { flex: 652; background: linear-gradient(#d0dcff, #bccdf8); }
.hbar .gap { flex: 70; }
.minibar { height: 21px; flex: none; display: flex; align-items: center; gap: 1px; background: linear-gradient(#4f8df3, #245edb 18%, #245bdb 85%, #1b4ab5); color: #d8e6ff; font: 7px/10px "Liberation Mono", "Noto Sans CJK SC", monospace; }
.minibar .start { width: 67px; height: 20px; margin: 0; padding-left: 7px; gap: 4px; font-size: 13px; line-height: 16px; color: #fff; }
.minibar .start svg { width: 14px; height: 14px; }
.quick { display: flex; gap: 4px; width: 94px; padding-left: 33px; }
.quick svg { width: 12px; height: 12px; }
.quick span { padding-left: 3px; }
.minibar .task { width: 108px; height: 17px; padding-left: 6px; border-radius: 2px; background: linear-gradient(#4a8bf5, #3a7df0); }
.minibar .task.on { background: #1948ad; }
.minibar .task svg { width: 11px; height: 11px; margin-right: 3px; }
.minibar b { font-size: 9px; font-weight: normal; }
.minibar .kbd { width: 11px; height: 9px; margin-left: auto; }
.minibar .tray { width: 139px; height: 21px; margin-left: 12px; display: flex; align-items: center; gap: 1px; background: linear-gradient(#30aef5, #1191ea 25%, #0f87dc); }
.minibar .tray svg { width: 11px; height: 11px; }
.minibar .tray svg:first-child { margin-left: -6px; width: 12px; }
.minibar time { margin-left: 4px; }

.float { position: absolute; left: 301px; top: 1px; width: 381px; height: 31px; display: flex; align-items: center; gap: 4px; padding-left: 5px; background: linear-gradient(#d4d4d4, #f0f0f0); border: 1px solid #aaa; border-top: 2px solid #fff; }
.float button { width: 21px; height: 21px; flex: none; border: 1px solid #b5b5b5; border-radius: 3px; background: linear-gradient(#e9e9e9, #bdbdbd); justify-content: center; }
.float button svg { width: 18px; height: 18px; }
.float .slim { width: 10px; }
.float .slim svg { width: 8px; }
.float .g1 { margin-left: 7px; }
.float .lit { background: #e0f3fb; border-color: #9bd4ec; }

.palette { position: absolute; left: 7px; top: 8px; width: 71px; height: 190px; padding: 0 3px 3px; background: #0d46d4; display: flex; flex-direction: column; }
.palette header { height: 13px; color: #fff; font-weight: bold; display: flex; align-items: center; justify-content: space-between; }
.palette header button { width: 10px; height: 10px; background: #d5613c; border: 1px solid #fff; justify-content: center; }
.palette header svg { width: 8px; height: 8px; }
.pbody { flex: 1; min-height: 0; background: #ece9d8; padding: 0 1px; }
.pt { display: grid; grid-template-columns: repeat(4, 16px); grid-auto-rows: 16px; place-items: center; height: 80px; }
.pt svg { width: 12px; height: 12px; }
.pt .picked { background: #fff; box-shadow: 0 0 0 2px #fff; }
.aa { font: italic bold 9px/10px "Liberation Serif", serif; }
.palette label { display: flex; align-items: center; gap: 2px; height: 16px; color: #aaa899; }
.palette label input { appearance: none; width: 9px; height: 9px; background: #fff; border: 1px solid #ddd; }
.pl { display: flex; gap: 4px; padding: 0 2px; }
.widths { width: 16px; height: 60px; background: #fff; border-left: 1px solid #888; border-top: 1px solid #888; display: flex; flex-direction: column; align-items: center; justify-content: space-between; padding: 3px 0 5px; }
.widths i { width: 8px; background: #000; }
.widths .w0 { width: 13px; height: 11px; border: solid #0a7a16; border-width: 4px 2px; }
.w1 { height: 3px; }
.w2 { height: 4px; }
.w3 { height: 5px; }
.w4 { height: 6px; }
.swatches { width: 40px; height: 60px; background: #fff; border-left: 1px solid #888; border-top: 1px solid #888; padding: 1px; display: grid; grid-template-columns: repeat(4, 8px); grid-auto-rows: 11px; gap: 1px; }
.swatches i { border: 1px solid #222; }
.swatches .fg { grid-area: 1 / 1 / 3 / 3; width: 12px; height: 16px; background: #000; box-shadow: 2px 2px #fff, 3px 3px #222; }
.dots { background: #111; border-style: dotted; }
.maroon { background: #800000; }
.green { background: #008000; }
.olive { background: #808000; }
.navy { background: #000080; }
.purple { background: #800080; }
.teal { background: #008080; }
.grey { background: #808080; }
.silver { background: #c0c0c0; }
.redc { background: #f00; }
.lime { background: #0f0; }
.yellow { background: #ff0; }
.blue { background: #00f; }
.pink { background: #f0f; }
.aqua { background: #0ff; }
.white { background: #fff; }
.pull { position: absolute; top: 0; left: 602px; width: 235px; height: 4px; background: #f1f1f1; border: 1px solid #aaa; border-top: 0; }
.meter { position: absolute; right: 0; bottom: 36px; width: 4px; height: 50px; background: #12b41b; }
```
